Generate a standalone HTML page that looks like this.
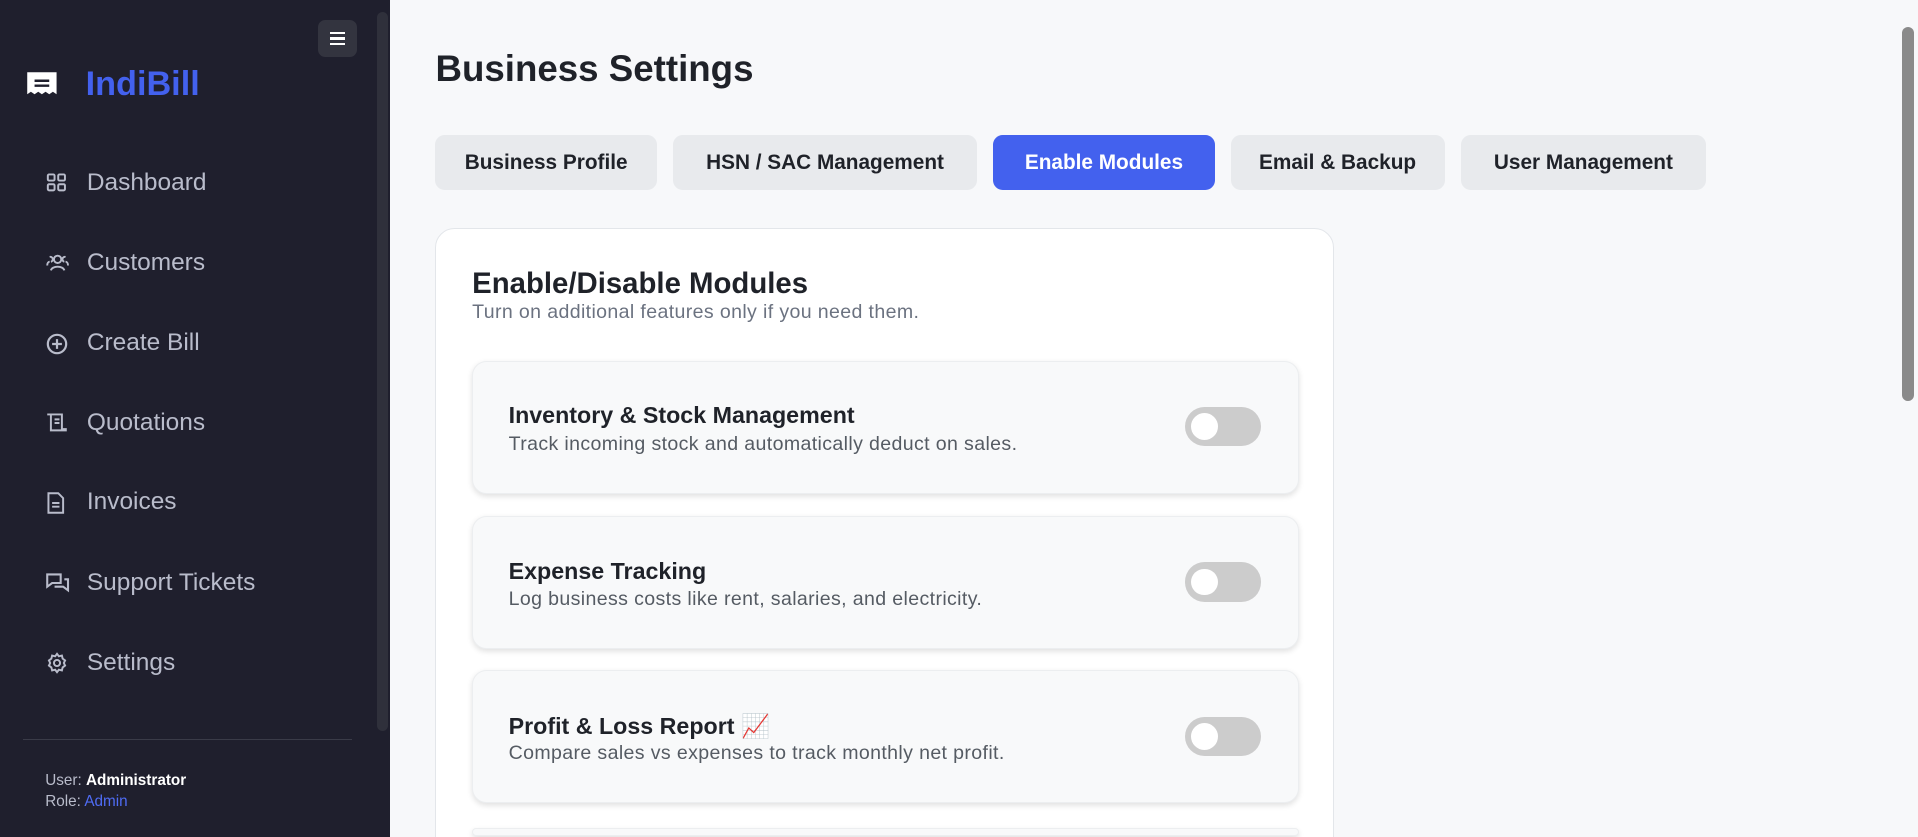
<!DOCTYPE html>
<html><head><meta charset="utf-8"><style>
html,body{margin:0;padding:0;overflow:hidden}
body{width:1918px;height:837px;background:#f7f8fa;font-family:"Liberation Sans",sans-serif}
#w{zoom:1.2232;width:1568px;height:684px;position:relative;overflow:hidden}
.sb{position:absolute;left:0;top:0;width:319px;height:684px;background:#1f1f2d}
.sbtrack{position:absolute;left:308px;top:10px;width:9px;height:588px;background:#2f303b;border-radius:5px}
.ham{position:absolute;left:260px;top:16px;width:32px;height:31px;background:#33343f;border-radius:6px}
.ham i{position:absolute;left:10px;width:12px;height:2px;background:#fff}
.logo{position:absolute;left:70px;top:53px;font-size:28px;font-weight:bold;color:#4361ee}
.nav{position:absolute;left:38px;color:#b9bccb;font-size:20px;height:30px;line-height:30px}
.nav svg{position:absolute;left:0;top:6px}
.nav span{position:absolute;left:33px;white-space:nowrap}
.div{position:absolute;left:19px;top:604px;width:269px;height:1px;background:#3a3b48}
.u{position:absolute;left:37px;font-size:12.5px;color:#b9bccb}
h1{position:absolute;left:356px;top:39px;margin:0;font-size:30px;color:#1f2229}
.tab{position:absolute;top:110px;height:45px;line-height:45px;border-radius:8px;background:#e8eaed;text-align:center;font-size:17px;font-weight:bold;color:#1f2229}
.card{position:absolute;left:356px;top:186px;width:733px;height:520px;background:#fff;border:1px solid #e3e6ea;border-radius:16px}
.ct{position:absolute;left:386px;top:218px;font-size:24px;font-weight:bold;color:#1f2229}
.cs{position:absolute;left:386px;top:246px;font-size:16px;color:#6b7280;letter-spacing:.3px}
.m{position:absolute;left:386px;width:674px;height:107px;background:#f8f9fa;border:1px solid #eceef0;border-radius:12px;box-shadow:0 2px 5px rgba(0,0,0,.12)}
.m b{position:absolute;left:29px;top:33px;font-size:19px;color:#1f2229}
.m p{position:absolute;left:29px;top:58px;margin:0;font-size:16px;color:#555b63;letter-spacing:.3px}
.t{position:absolute;left:582px;top:37px;width:62px;height:32px;border-radius:16px;background:#ccc}
.t:after{content:"";position:absolute;left:5px;top:5px;width:22px;height:22px;border-radius:50%;background:#fff}
.psb{position:absolute;left:1552px;top:0;width:16px;height:684px;background:#f7f8fa}
.pth{position:absolute;left:1555px;top:22px;width:10px;height:306px;background:#8a8a8a;border-radius:5px}
</style></head><body><div id="w">
<div class="sb">
<div class="sbtrack"></div>
<div class="ham"><i style="top:10px"></i><i style="top:14.5px"></i><i style="top:19px"></i></div>
<svg style="position:absolute;left:21px;top:58px" width="26" height="21" viewBox="0 0 26 21"><path d="M1 1h24v18l-3-2-3 2-3-2-3 2-3-2-3 2-3-2-3 2z" fill="#fff"/><path d="M7 8h12M7 12h12" stroke="#1f1f2d" stroke-width="2"/></svg>
<div class="logo">IndiBill</div>
<div class="nav" style="top:135px"><svg width="17" height="17" viewBox="0 0 17 17" fill="none" stroke="#b9bccb" stroke-width="1.6"><rect x="1.5" y="2" width="5.5" height="5" rx="1"/><rect x="10" y="2" width="5.5" height="5" rx="1"/><rect x="1.5" y="10" width="5.5" height="5" rx="1"/><rect x="10" y="10" width="5.5" height="5" rx="1"/></svg><span>Dashboard</span></div>
<div class="nav" style="top:200px"><svg width="19" height="17" viewBox="0 0 19 17" fill="none" stroke="#b9bccb" stroke-width="1.6"><circle cx="9.5" cy="6" r="3"/><path d="M4 15c1-4 10-4 11 0M3 4a2 2 0 1 1 1 4M1 11c0-2 1-3 2-3M16 4a2 2 0 1 0-1 4M18 11c0-2-1-3-2-3"/></svg><span>Customers</span></div>
<div class="nav" style="top:266px"><svg width="18" height="18" viewBox="0 0 18 18" fill="none" stroke="#b9bccb" stroke-width="1.8"><circle cx="9" cy="9" r="7.5"/><path d="M9 5v8M5 9h8"/></svg><span>Create Bill</span></div>
<div class="nav" style="top:331px"><svg width="18" height="17" viewBox="0 0 18 17" fill="none" stroke="#b9bccb" stroke-width="1.6"><path d="M1 2h12v12h4M4 2v13h13M7 6h4M7 9h4"/></svg><span>Quotations</span></div>
<div class="nav" style="top:396px"><svg width="16" height="18" viewBox="0 0 16 18" fill="none" stroke="#b9bccb" stroke-width="1.6"><path d="M2 1h8l4 4v12H2zM5 9h6M5 12h6"/></svg><span>Invoices</span></div>
<div class="nav" style="top:462px"><svg width="19" height="17" viewBox="0 0 19 17" fill="none" stroke="#b9bccb" stroke-width="1.7"><path d="M1 2h11v7H5l-4 3zM7 12h7l4 3V6h-3"/></svg><span>Support Tickets</span></div>
<div class="nav" style="top:527px"><svg width="18" height="18" viewBox="0 0 18 18" fill="none" stroke="#b9bccb" stroke-width="1.6"><circle cx="9" cy="9" r="2.5"/><path d="M9 1.5l1.5 2 2.5-.6.6 2.5 2 1.5-1 2.1 1 2.1-2 1.5-.6 2.5-2.5-.6L9 16.5l-1.5-2-2.5.6-.6-2.5-2-1.5 1-2.1-1-2.1 2-1.5.6-2.5 2.5.6z"/></svg><span>Settings</span></div>
<div class="div"></div>
<div class="u" style="top:631px">User: <b style="color:#fff">Administrator</b></div>
<div class="u" style="top:648px">Role: <span style="color:#4f6cf5">Admin</span></div>
</div>
<h1>Business Settings</h1>
<div class="tab" style="left:356px;width:181px">Business Profile</div>
<div class="tab" style="left:550px;width:249px">HSN / SAC Management</div>
<div class="tab" style="left:812px;width:181px;background:#4361ee;color:#fff">Enable Modules</div>
<div class="tab" style="left:1006px;width:175px">Email &amp; Backup</div>
<div class="tab" style="left:1194px;width:201px">User Management</div>
<div class="card"></div>
<div class="ct">Enable/Disable Modules</div>
<div class="cs">Turn on additional features only if you need them.</div>
<div class="m" style="top:295px"><b>Inventory &amp; Stock Management</b><p>Track incoming stock and automatically deduct on sales.</p><div class="t"></div></div>
<div class="m" style="top:422px"><b>Expense Tracking</b><p>Log business costs like rent, salaries, and electricity.</p><div class="t"></div></div>
<div class="m" style="top:548px"><b>Profit &amp; Loss Report <span style="font-weight:normal">📈</span></b><p>Compare sales vs expenses to track monthly net profit.</p><div class="t"></div></div>
<div class="m" style="top:677px;height:5px"></div>
<div class="psb"></div><div class="pth"></div>
</div></body></html>
